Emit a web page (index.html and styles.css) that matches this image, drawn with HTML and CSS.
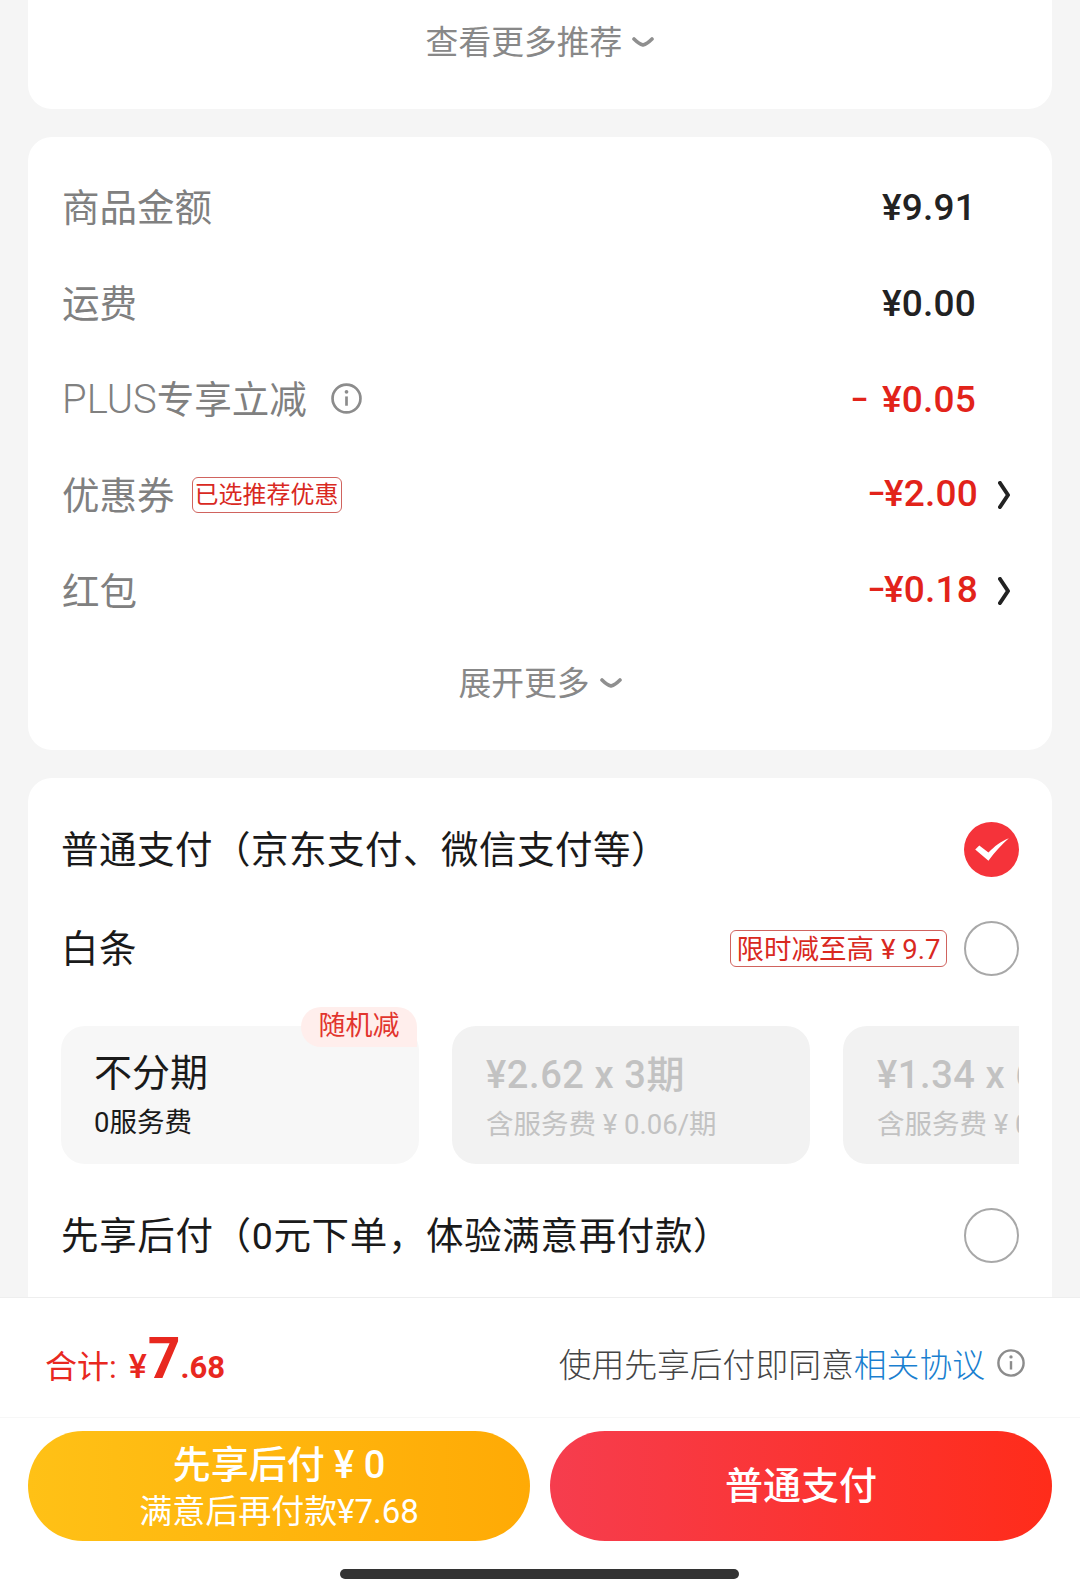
FILE: index.html
```html
<!DOCTYPE html>
<html lang="zh-CN">
<head>
    <meta charset="UTF-8">
    <meta name="viewport" content="width=device-width, initial-scale=1.0">
    <title>确认订单</title>
    <link rel="stylesheet" href="styles.css">
</head>
<body>
    <div class="page">
        <div class="main">
            <!-- 推荐 -->
            <div class="card card-top">
                <div class="more"><span class="more-text">查看更多推荐</span>
                    <svg class="down" viewBox="0 0 22 10"><path d="M2 2 Q7 7 11 8 Q15 7 20 2"/></svg>
                </div>
            </div>

            <!-- 金额 -->
            <div class="card card-price">
                <div class="row">
                    <span class="label">商品金额</span>
                    <span class="value">¥9.91</span>
                </div>
                <div class="row">
                    <span class="label">运费</span>
                    <span class="value">¥0.00</span>
                </div>
                <div class="row">
                    <span class="label"><span class="plus">PLUS</span>专享立减</span>
                    <svg class="info info-big" viewBox="0 0 30 30"><circle cx="15" cy="15" r="13.5"/><path d="M15 13v9"/><circle class="dot" cx="15" cy="8.5" r="1.8"/></svg>
                    <span class="value red"><span class="minus minus-gap">–</span>¥0.05</span>
                </div>
                <div class="row row-arrow">
                    <span class="label">优惠券</span>
                    <span class="tag tag-coupon">已选推荐优惠</span>
                    <span class="value red"><span class="minus">–</span>¥2.00</span>
                    <svg class="arrow" viewBox="0 0 12 28"><path d="M2 2 L10 14 L2 26"/></svg>
                </div>
                <div class="row row-arrow">
                    <span class="label">红包</span>
                    <span class="value red"><span class="minus">–</span>¥0.18</span>
                    <svg class="arrow" viewBox="0 0 12 28"><path d="M2 2 L10 14 L2 26"/></svg>
                </div>
                <div class="more more-price"><span class="more-text">展开更多</span>
                    <svg class="down" viewBox="0 0 22 10"><path d="M2 2 Q7 7 11 8 Q15 7 20 2"/></svg>
                </div>
            </div>

            <!-- 支付方式 -->
            <div class="card card-pay">
                <div class="pay-row">
                    <span class="pay-name">普通支付（京东支付、微信支付等）</span>
                    <svg class="radio" viewBox="0 0 54 54"><circle class="on" cx="27" cy="27" r="27"/><path class="tick" d="M11 27 L15 23 L24 30 C30 24 36 19 44 16 C37 22 30 30 24 38 Z"/></svg>
                </div>
                <div class="pay-row pay-row-bt">
                    <span class="pay-name">白条</span>
                    <span class="tag tag-bt">限时减至高 ¥ 9.7</span>
                    <span class="radio radio-off"></span>
                </div>
                <div class="plans">
                    <div class="plan plan-on">
                        <span class="plan-badge">随机减</span>
                        <div class="plan-title">不分期</div>
                        <div class="plan-sub">0服务费</div>
                    </div>
                    <div class="plan">
                        <div class="plan-title">¥2.62 x 3期</div>
                        <div class="plan-sub">含服务费 ¥ 0.06/期</div>
                    </div>
                    <div class="plan">
                        <div class="plan-title">¥1.34 x 6期</div>
                        <div class="plan-sub">含服务费 ¥ 0.04/期</div>
                    </div>
                </div>
                <div class="pay-row pay-row-later">
                    <span class="pay-name">先享后付（0元下单，体验满意再付款）</span>
                    <span class="radio radio-off"></span>
                </div>
            </div>
        </div>

        <!-- 底部 -->
        <div class="footer">
            <div class="total-bar">
                <div class="total">
                    <span class="total-label">合计:</span>
                    <span class="total-yen">¥</span><span class="total-int">7</span><span class="total-dec">.68</span>
                </div>
                <div class="agree">
                    <span>使用先享后付即同意<a class="agree-link">相关协议</a></span>
                    <svg class="info" viewBox="0 0 30 30"><circle cx="15" cy="15" r="13.5"/><path d="M15 13v9"/><circle class="dot" cx="15" cy="8.5" r="1.8"/></svg>
                </div>
            </div>
            <div class="buttons">
                <div class="btn btn-later">
                    <div class="btn-main">先享后付 ¥ 0</div>
                    <div class="btn-sub">满意后再付款¥7.68</div>
                </div>
                <div class="btn btn-pay">
                    <div class="btn-main">普通支付</div>
                </div>
            </div>
            <div class="home-bar"></div>
        </div>
    </div>
</body>
</html>
```

FILE: styles.css
```css
*{
    padding: 0;
    margin: 0;
    box-sizing: border-box;
}
html, body{
    width: 100%;
    height: 100%;
    overflow: hidden;
}
body{
    font-family: Roboto, "Noto Sans CJK SC", sans-serif;
    color: #1a1a1a;
    background: #f5f5f5;
}

.page{
    height: 100%;
    display: flex;
    flex-direction: column;
}
.main{
    flex: 1;
    min-height: 0;
    overflow: hidden;
    padding: 0 28px;
}

.card{
    background: #fff;
    border-radius: 24px;
    margin-bottom: 28px;
}
.card-top{
    height: 109px;
    padding-top: 16px;
    border-radius: 0 0 24px 24px;
}
.card-price{
    height: 613px;
    padding: 22px 0 0 34px;
}
.card-pay{
    padding: 21px 33px 40px;
}

/* 查看更多 */
.more{
    height: 52px;
    display: flex;
    align-items: center;
    justify-content: center;
    gap: 10px;
    color: #888;
}
.more-text{
    font-size: 32.8px;
    padding-bottom: 5px;
}
.more-price{
    height: 88px;
    margin-left: -34px;
}
.down{
    width: 22px;
    height: 10px;
    fill: none;
    stroke: #8f8f8f;
    stroke-width: 3.6;
    stroke-linecap: round;
}

/* 金额行 */
.row{
    height: 96px;
    padding-right: 76px;
    display: flex;
    align-items: center;
}
.row-arrow{
    padding-right: 42px;
}
.label{
    font-size: 37.5px;
    color: #808080;
    padding-bottom: 6px;
}
.plus{
    font-size: 40px;
    font-weight: 300;
}
.value{
    margin-left: auto;
    font-size: 37px;
    font-weight: 500;
    color: #222;
    letter-spacing: 0.2px;
}
.row-arrow .value{
    padding-bottom: 4px;
}
.red{
    color: #e2231a;
}
.minus{
    font-size: 26px;
    font-weight: 900;
    vertical-align: 4px;
    letter-spacing: 0;
}
.minus-gap{
    margin-right: 15px;
}
.arrow{
    width: 12px;
    height: 28px;
    margin-left: 20px;
    fill: none;
    stroke: #222;
    stroke-width: 4;
    stroke-linecap: round;
    stroke-linejoin: round;
}
.info{
    width: 28px;
    height: 28px;
    margin-left: 12px;
    fill: none;
    stroke: #8c8c8c;
    stroke-width: 2.6;
}
.info .dot{
    fill: #8c8c8c;
    stroke: none;
}
.info-big{
    width: 31px;
    height: 31px;
    margin-left: 24px;
    margin-bottom: 2px;
}

.tag{
    border: 1px solid #d0635e;
    border-radius: 6px;
    color: #d9291f;
    text-align: center;
    white-space: nowrap;
}
.tag-coupon{
    width: 150px;
    height: 36px;
    margin-left: 17px;
    font-size: 24px;
    line-height: 35px;
}
.tag-bt{
    width: 217px;
    height: 37px;
    margin-left: auto;
    margin-right: 17px;
    font-size: 27.5px;
    line-height: 37px;
}

/* 支付方式 */
.pay-row{
    height: 100px;
    display: flex;
    align-items: center;
    justify-content: space-between;
}
.pay-row-bt{
    height: 98px;
}
.pay-row-later{
    margin-top: 21px;
}
.pay-row-later .pay-name{
    letter-spacing: 0.65px;
}
.pay-name{
    font-size: 37.5px;
    letter-spacing: 0.5px;
    padding-bottom: 6px;
}
.radio{
    width: 55px;
    height: 55px;
    flex: none;
    display: block;
}
.radio-off{
    border: 2px solid #a8a8a8;
    border-radius: 50%;
}
.radio .on{
    fill: #f5333a;
}
.radio .tick{
    fill: #fff;
}

/* 分期 */
.plans{
    margin-top: 10px;
    padding-top: 19px;
    display: flex;
    gap: 33px;
    overflow: hidden;
}
.plan{
    width: 358px;
    height: 138px;
    flex: none;
    padding: 25px 0 0 34px;
    position: relative;
    background: #f2f2f2;
    border-radius: 24px;
    color: #c2c2c2;
}
.plan-on{
    background: #f7f7f7;
    color: #1a1a1a;
    padding-left: 33px;
}
.plan-title{
    height: 48px;
    line-height: 48px;
    font-size: 38px;
    font-weight: 500;
    letter-spacing: 0.6px;
    white-space: nowrap;
}
.plan-on .plan-title{
    margin-top: -2px;
    margin-bottom: 2px;
    font-weight: 400;
    letter-spacing: 0;
}
.plan-sub{
    margin-top: 6px;
    height: 40px;
    line-height: 40px;
    font-size: 27.5px;
    white-space: nowrap;
}
.plan-badge{
    position: absolute;
    top: -19px;
    right: 2px;
    width: 116px;
    height: 40px;
    line-height: 38px;
    text-align: center;
    font-size: 27px;
    color: #e2352e;
    background: #ffeeec;
    border-radius: 22px 22px 0 22px;
}

/* 底部 */
.footer{
    flex: none;
    height: 299px;
    background: #fff;
    border-top: 1px solid #eee;
}
.total-bar{
    height: 120px;
    padding: 10px 55px 0 45px;
    display: flex;
    align-items: center;
    justify-content: space-between;
    border-bottom: 1px solid #f7f7f7;
}
.total{
    display: flex;
    align-items: baseline;
    color: #e8281f;
    margin-bottom: 9px;
}
.total-label{
    font-size: 32px;
    margin-right: 12px;
}
.total-yen{
    font-size: 34px;
    font-weight: 500;
    margin-right: 1px;
}
.total-int{
    font-size: 57px;
    line-height: 1;
    font-weight: 700;
}
.total-dec{
    font-size: 31px;
    font-weight: 700;
}
.agree{
    display: flex;
    align-items: center;
    font-size: 32.8px;
    font-weight: 300;
    color: #444;
}
.agree-link{
    color: #1a7fd0;
}

.buttons{
    padding: 13px 28px 0;
    display: flex;
    gap: 20px;
}
.btn{
    flex: 1;
    height: 110px;
    border-radius: 55px;
    color: #fff;
    display: flex;
    flex-direction: column;
    align-items: center;
    justify-content: center;
}
.btn-later{
    padding-top: 4px;
    background: linear-gradient(90deg, #ffc116, #ffaa05);
}
.btn-pay{
    background: linear-gradient(90deg, #f63d4e, #ff2c1a);
}
.btn-main{
    font-size: 38px;
    font-weight: 500;
    line-height: 48px;
}
.btn-sub{
    font-size: 33px;
    line-height: 46px;
}
.home-bar{
    width: 399px;
    height: 10px;
    margin: 28px 0 0 340px;
    background: #333;
    border-radius: 5px;
}
```
